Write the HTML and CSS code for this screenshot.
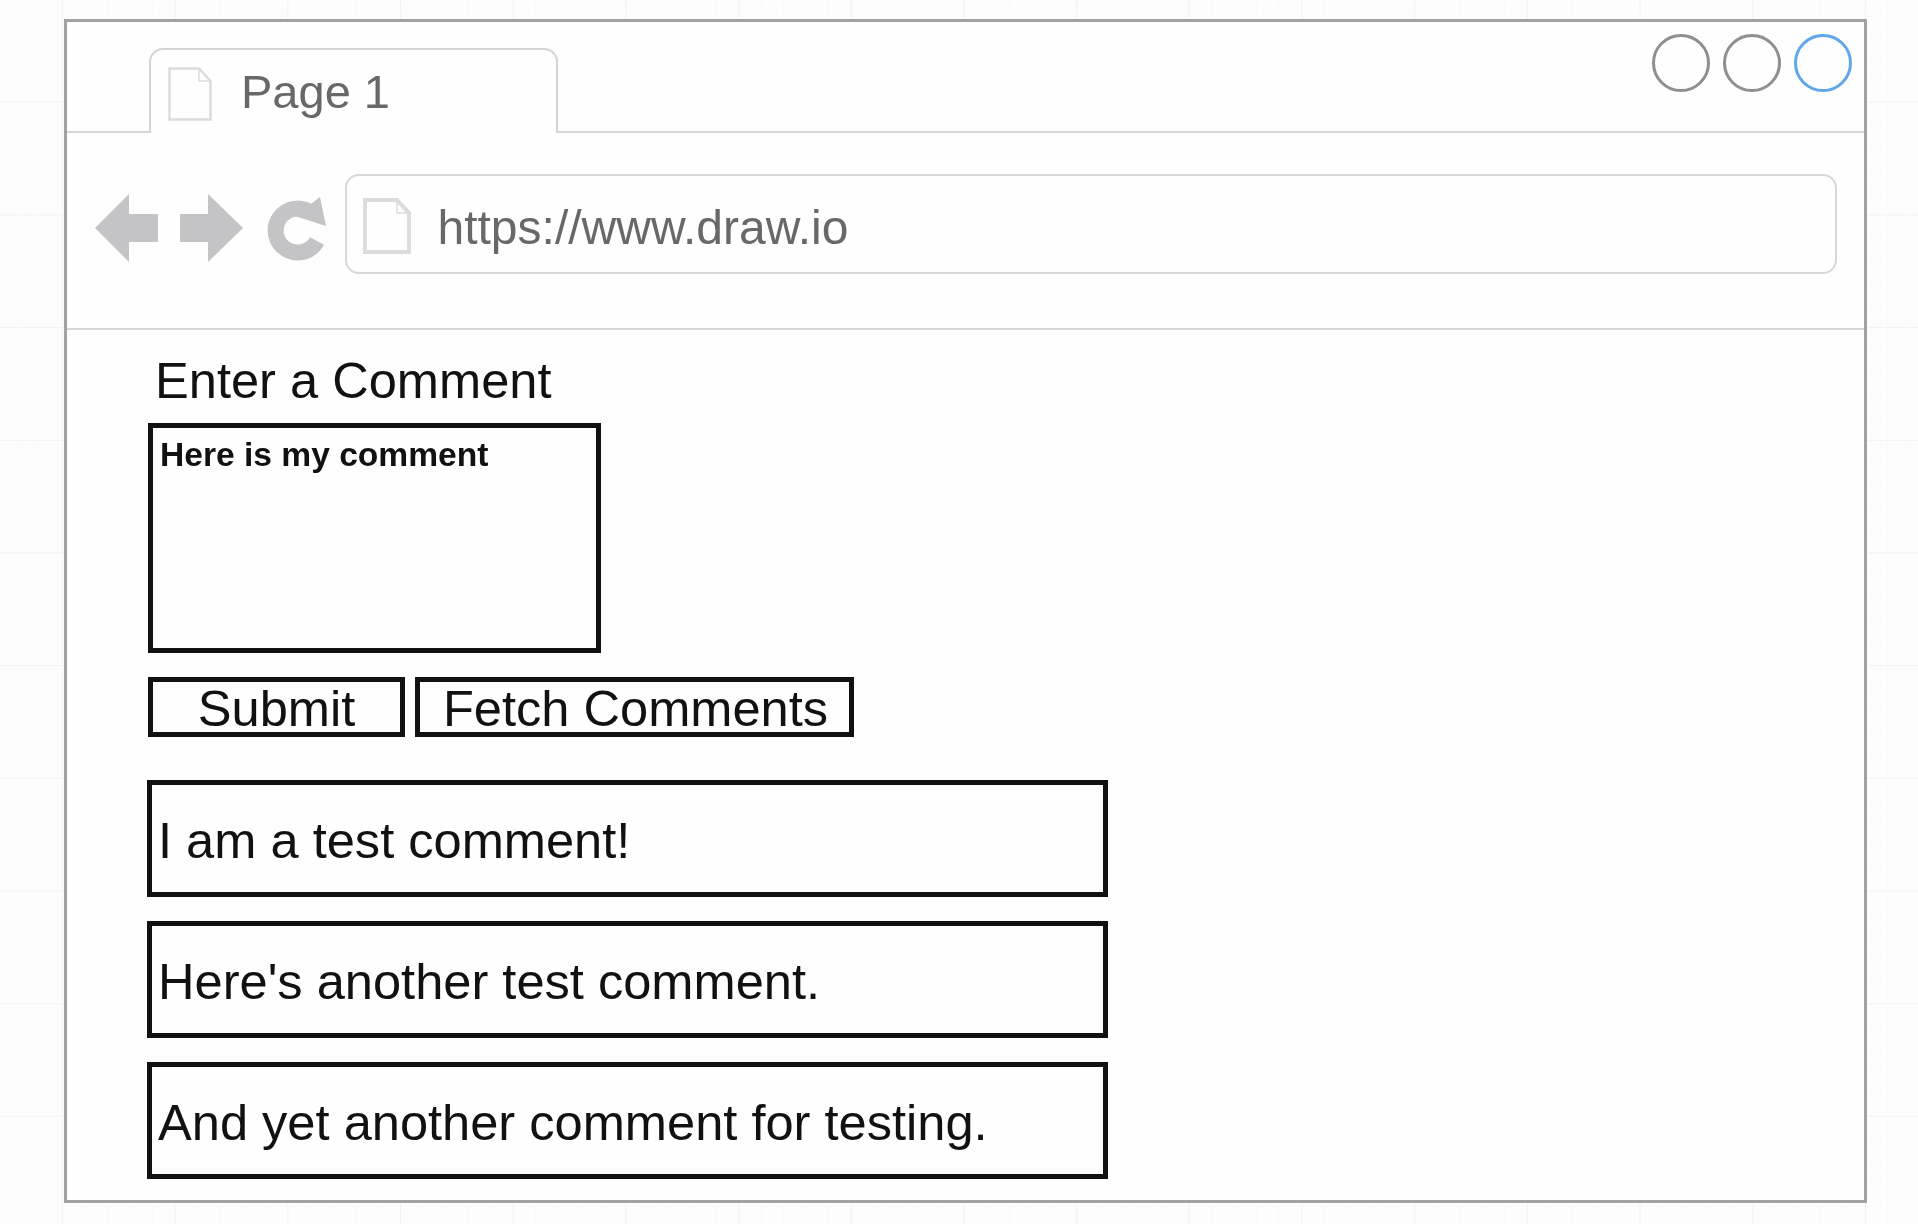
FILE: index.html
```html
<!DOCTYPE html>
<html lang="en">
<head>
<meta charset="utf-8">
<title>Page 1</title>
<link rel="stylesheet" href="styles.css">
</head>
<body>
<div class="window">
  <header class="tabbar">
    <div class="tab">
      <svg class="doc-tab" viewBox="0 0 44 54"><path class="doc-line" d="M1.5 1.5H31L42.5 14V52.5H1.5Z"/><path class="doc-fold" d="M31 1.5V14H42.5"/></svg>
      <span class="tab-title">Page 1</span>
    </div>
    <div class="controls">
      <span class="dot"></span>
      <span class="dot"></span>
      <span class="dot dot-blue"></span>
    </div>
  </header>
  <nav class="toolbar">
    <svg class="nav-icon back" viewBox="0 0 63 68"><path d="M0 34L34 0V20H63V48H34V68Z"/></svg>
    <svg class="nav-icon forward" viewBox="0 0 63 68"><path d="M63 34L28 0V20H0V48H28V68Z"/></svg>
    <svg class="nav-icon reload" viewBox="0 0 60 64"><path class="reload-arc" d="M50 44A22 22 0 1 1 44 16"/><path d="M53 0L59 29L28 19Z"/></svg>
    <div class="address">
      <svg class="doc-addr" viewBox="0 0 48 56"><path class="doc-line thick" d="M2 2H34L46 15V54H2Z"/><path class="doc-fold" d="M34 2V15H46"/></svg>
      <span class="url">https://www.draw.io</span>
    </div>
  </nav>
  <main class="content">
    <div class="heading">Enter a Comment</div>
    <div class="comment-input">Here is my comment</div>
    <div class="actions">
      <div class="btn btn-submit">Submit</div>
      <div class="btn btn-fetch">Fetch Comments</div>
    </div>
    <div class="comments">
      <div class="comment">I am a test comment!</div>
      <div class="comment">Here's another test comment.</div>
      <div class="comment">And yet another comment for testing.</div>
    </div>
  </main>
</div>
</body>
</html>
```
FILE: styles.css
```css
* { box-sizing: border-box; }
html, body { height: 100%; }
body {
  margin: 0;
  padding: 19px 0 0 64px;
  overflow: hidden;
  font-family: "Liberation Sans", Arial, sans-serif;
  background-color: #fdfdfe;
  background-image:
    linear-gradient(#f3f3f6 1px, transparent 1px),
    linear-gradient(90deg, #f3f3f6 1px, transparent 1px),
    linear-gradient(#fafafb 1px, transparent 1px),
    linear-gradient(90deg, #fafafb 1px, transparent 1px);
  background-size: 112.7px 112.7px, 112.7px 112.7px, 22.54px 22.54px, 22.54px 22.54px;
  background-position: 0 -11px, 62px 0, 0 -11px, 62px 0;
}
.window {
  width: 1803px;
  height: 1184px;
  border: 3px solid #a2a2a4;
  background: #fefefe;
  filter: blur(0.6px);
}
.tabbar {
  height: 111px;
  display: flex;
  align-items: flex-start;
  justify-content: space-between;
  padding: 12px 12px 0 82px;
  border-bottom: 2px solid #d6d6d8;
}
.tab {
  width: 409px;
  height: 85px;
  margin-top: 14px;
  display: flex;
  align-items: flex-start;
  gap: 29px;
  padding: 16px 0 0 17px;
  border: 2px solid #d4d4d6;
  border-bottom: 0;
  border-radius: 14px 14px 0 0;
  background: #fefefe;
}
.doc-tab { width: 44px; height: 54px; flex: none; margin-top: 1px; }
.doc-line, .doc-fold { fill: none; stroke: #dcdcde; stroke-width: 2.5; }
.doc-line.thick { stroke-width: 4; }
.doc-fold { stroke-width: 1.5; }
.tab-title {
  font-size: 47px;
  line-height: 52px;
  color: #68686a;
}
.controls { display: flex; gap: 13px; }
.dot {
  width: 58px;
  height: 58px;
  border: 3px solid #8f8f8f;
  border-radius: 50%;
}
.dot-blue { border-color: #5fa6ea; }
.toolbar {
  height: 197px;
  display: flex;
  align-items: center;
  padding: 0 27px 5px 28px;
  border-bottom: 2px solid #d6d6d8;
}
.nav-icon { flex: none; fill: #c4c4c6; }
.back { width: 63px; height: 68px; }
.forward { width: 63px; height: 68px; margin-left: 22px; }
.reload { width: 60px; height: 64px; margin: 2px 0 0 24px; }
.reload-arc { fill: none; stroke: #c4c4c6; stroke-width: 16; }
.address {
  flex: 1;
  height: 100px;
  margin: 0 0 8px 18px;
  display: flex;
  align-items: center;
  gap: 26.5px;
  padding: 0 0 0 16px;
  border: 2px solid #d8d8da;
  border-radius: 14px;
}
.doc-addr { width: 48px; height: 56px; flex: none; margin-top: 3px; }
.url {
  font-size: 48px;
  line-height: 56px;
  margin-top: 7px;
  color: #68686a;
}
.content {
  padding: 22px 0 0 81px;
  color: #111;
}
.heading {
  font-size: 50.6px;
  line-height: 58px;
  margin-left: 7px;
}
.comment-input {
  width: 453px;
  height: 230px;
  margin-top: 13px;
  padding: 8px 7px;
  border: 5px solid #111;
  font-size: 33.6px;
  font-weight: 700;
  line-height: 38px;
}
.actions {
  display: flex;
  gap: 10px;
  margin-top: 24px;
}
.btn {
  height: 60px;
  display: flex;
  align-items: center;
  justify-content: center;
  padding-top: 4px;
  border: 5px solid #111;
  font-size: 50.6px;
  line-height: 50px;
}
.btn-submit { width: 257px; }
.btn-fetch { width: 439px; padding-left: 2px; }
.comments {
  display: flex;
  flex-direction: column;
  gap: 24px;
  margin-top: 43px;
  margin-left: -1px;
}
.comment {
  width: 961px;
  height: 117px;
  display: flex;
  align-items: center;
  padding: 4px 6px 0;
  border: 5px solid #111;
  font-size: 50.6px;
  line-height: 56px;
}
```
